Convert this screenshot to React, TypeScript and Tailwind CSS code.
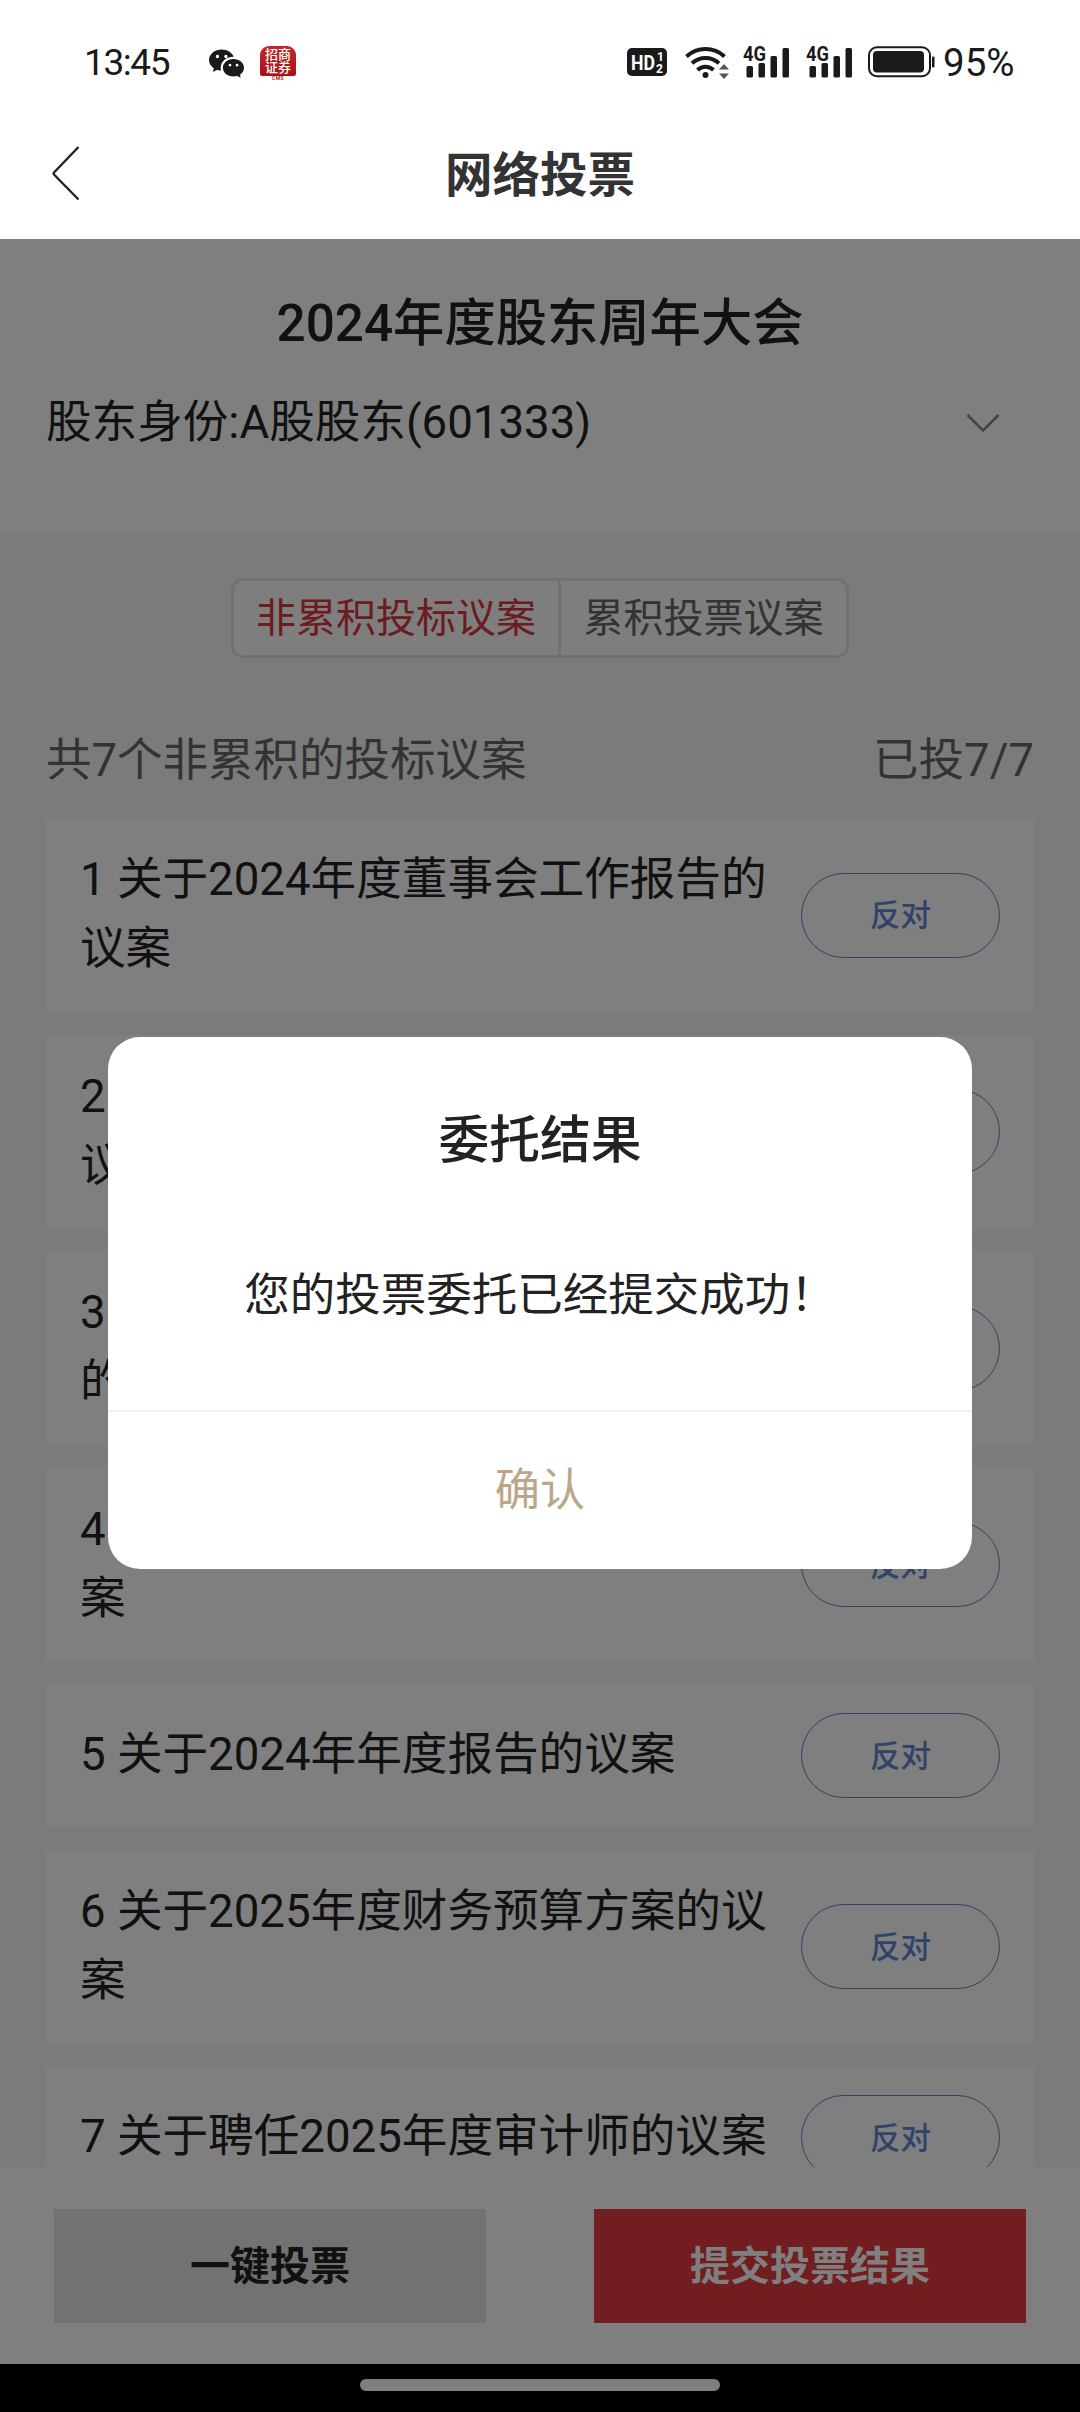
import { BsWechat } from "react-icons/bs";

const motions = [
  "关于2024年度董事会工作报告的议案",
  "关于2024年度监事会工作报告的议案",
  "关于2024年度财务决算审计报告的议案",
  "关于2024年度利润分配方案的议案",
  "关于2024年年度报告的议案",
  "关于2025年度财务预算方案的议案",
  "关于聘任2025年度审计师的议案",
];

function Signal() {
  return (
    <svg className="overflow-visible" width="48" height="34" viewBox="0 0 48 34" fill="#1a1a1a">
      <text x="0" y="16" fontSize="21" fontWeight="700" textLength="23" lengthAdjust="spacingAndGlyphs">
        4G
      </text>
      <rect x="3.5" y="21" width="6.5" height="11.5" rx="1.5" />
      <rect x="15.5" y="18" width="6.5" height="14.5" rx="1.5" />
      <rect x="27.5" y="11" width="6.5" height="21.5" rx="1.5" />
      <rect x="39.5" y="3" width="6.5" height="29.5" rx="1.5" />
    </svg>
  );
}

function StatusBar() {
  return (
    <div className="flex h-[124px] items-center px-[65px] text-[#1a1a1a]">
      <span className="ml-[19px] w-[85px] pt-0.5 text-[37px] tracking-[-1.4px]">13:45</span>
      <BsWechat className="ml-[40px] h-[35px] w-[35px]" />
      <div className="ml-[16px] flex flex-col items-center pt-0.5">
        <div className="flex h-[30px] w-9 flex-col items-center justify-center rounded-t-[9px] rounded-b-[2px] bg-gradient-to-b from-[#c4262a] to-[#a81216] text-[13px] leading-[13px] font-medium text-white">
          <span>招商</span>
          <span>证券</span>
        </div>
        <span className="h-[5px] text-[5px] leading-[5px] font-bold tracking-[0.5px] text-[#b3181c]">CMS</span>
      </div>

      <div className="ml-auto flex items-center">
        <svg width="40" height="28" viewBox="0 0 40 28">
          <rect width="40" height="28" rx="5" fill="#1a1a1a" />
          <g fill="#fff" fontWeight="700">
            <text x="4" y="21.5" fontSize="21" textLength="24" lengthAdjust="spacingAndGlyphs">HD</text>
            <text x="30" y="13" fontSize="12">1</text>
            <text x="29" y="25" fontSize="12">2</text>
          </g>
        </svg>
        <svg className="ml-[18px]" width="44" height="34" viewBox="0 0 44 34" fill="none" stroke="#1a1a1a" strokeWidth="4">
          <path d="M1.5 11.5a28 28 0 0 1 38 0" />
          <path d="M7 18.3a20 20 0 0 1 27 0" />
          <path d="M12.5 25a11.5 11.5 0 0 1 16 0" />
          <circle cx="20.5" cy="30" r="3" fill="#1a1a1a" stroke="none" />
          <path d="M34 24.5l5-5.5 5 5.5zM34 28.5l5 5.5 5-5.5z" fill="#555" stroke="none" />
        </svg>
        <div className="ml-[14px]"><Signal /></div>
        <div className="ml-[15px]"><Signal /></div>
        <svg className="ml-[14px]" width="68" height="32" viewBox="0 0 68 32">
          <rect x="1" y="1.25" width="61" height="29" rx="8" fill="none" stroke="#1a1a1a" strokeWidth="2" />
          <rect x="5" y="5" width="51" height="21.5" rx="4" fill="#1a1a1a" />
          <rect x="64" y="10.5" width="2.5" height="11" rx="1" fill="#1a1a1a" />
        </svg>
        <span className="ml-[7px] w-[72px] pt-0.5 text-[38.5px]">95%</span>
      </div>
    </div>
  );
}

function Header() {
  return (
    <header className="h-[239px] bg-white">
      <StatusBar />
      <div className="relative flex h-[98px] items-center justify-center">
        <svg className="absolute top-[21px] left-[50px]" width="32" height="56" viewBox="0 0 32 56" fill="none" stroke="#222" strokeWidth="2.4">
          <path d="M28.5 2L4 27.5Q3 28.5 4 29.5L28.5 54.5" />
        </svg>
        <h1 className="pt-2 text-[47.5px] font-bold text-[#333]">网络投票</h1>
      </div>
    </header>
  );
}

function MotionCard({ index, title }: { index: number; title: string }) {
  return (
    <li className="flex items-center bg-white px-[34px] py-7">
      <p className="-mt-px mb-px flex min-h-[87px] flex-1 items-center text-[45.6px] leading-[69px] text-[#222]">
        {`${index} ${title}`}
      </p>
      <button className="ml-3 h-[85px] w-[199px] shrink-0 rounded-full border border-[#5e84cc] pt-0.5 text-[30.5px] font-medium text-[#5e88d0]">
        反对
      </button>
    </li>
  );
}

function ResultDialog() {
  return (
    <div className="absolute inset-x-0 top-[239px] bottom-0 bg-black/50">
      <div
        role="dialog"
        className="mx-auto mt-[798px] flex h-[532px] w-[864px] flex-col rounded-[32px] bg-white text-center text-[#222]"
      >
        <h3 className="mt-[66px] text-[50.8px] leading-[76px] font-medium">委托结果</h3>
        <p className="mt-[83px] text-[45.5px] leading-[68px]">您的投票委托已经提交成功！</p>
        <button className="mt-auto h-[159px] border-t-2 border-[#f2f2f2] text-[45.2px] text-[#bca688]">确认</button>
      </div>
    </div>
  );
}

export default function App() {
  return (
    <div className="relative flex h-[2412px] w-[1080px] flex-col overflow-hidden bg-[#f7f7f7] font-['Roboto','Noto_Sans_CJK_SC',sans-serif]">
      <Header />

      <section className="h-[294px] shrink-0 bg-white px-[46px] pt-[47px] text-[#222]">
        <h2 className="text-center text-[51.3px] leading-[76px] font-medium">2024年度股东周年大会</h2>
        <div className="mt-[27px] flex items-center justify-between">
          <span className="text-[45.6px] leading-[68px]">股东身份:A股股东(601333)</span>
          <svg className="mr-[34px]" width="34" height="20" viewBox="0 0 34 20" fill="none" stroke="#888" strokeWidth="2.5">
            <path d="M1.5 2L17 17.5 32.5 2" />
          </svg>
        </div>
      </section>

      <main className="flex min-h-0 flex-1 flex-col overflow-hidden px-[46px]">
        <div className="mt-[45px] flex h-20 shrink-0 self-center rounded-xl border-[3px] border-[#e2e2e2] bg-[#fcfcfc] text-[40px]">
          <button className="w-[327px] border-r-[3px] border-[#e2e2e2] pt-0.5 text-[#d9363c]">非累积投标议案</button>
          <button className="w-[285px] pt-0.5 text-[#666]">累积投票议案</button>
        </div>

        <div className="mt-[69px] flex h-[68px] shrink-0 items-center justify-between text-[45.5px] text-[#666]">
          <span>共7个非累积的投标议案</span>
          <span>已投7/7</span>
        </div>

        <ul className="mt-[23px] flex flex-col gap-[22.5px]">
          {motions.map((title, i) => (
            <MotionCard key={title} index={i + 1} title={title} />
          ))}
        </ul>
      </main>

      <footer className="flex h-[197px] shrink-0 justify-between bg-white px-[54px] pt-[42px] text-[40px] font-bold">
        <button className="h-[114px] w-[432px] bg-[#e4e4e4] pt-0.5 text-[#222]">一键投票</button>
        <button className="h-[114px] w-[432px] bg-[#e43a40] pt-0.5 text-white">提交投票结果</button>
      </footer>

      <div className="flex h-12 shrink-0 justify-center bg-black pt-[15px]">
        <div className="h-3 w-[360px] rounded-full bg-white" />
      </div>

      <ResultDialog />
    </div>
  );
}
